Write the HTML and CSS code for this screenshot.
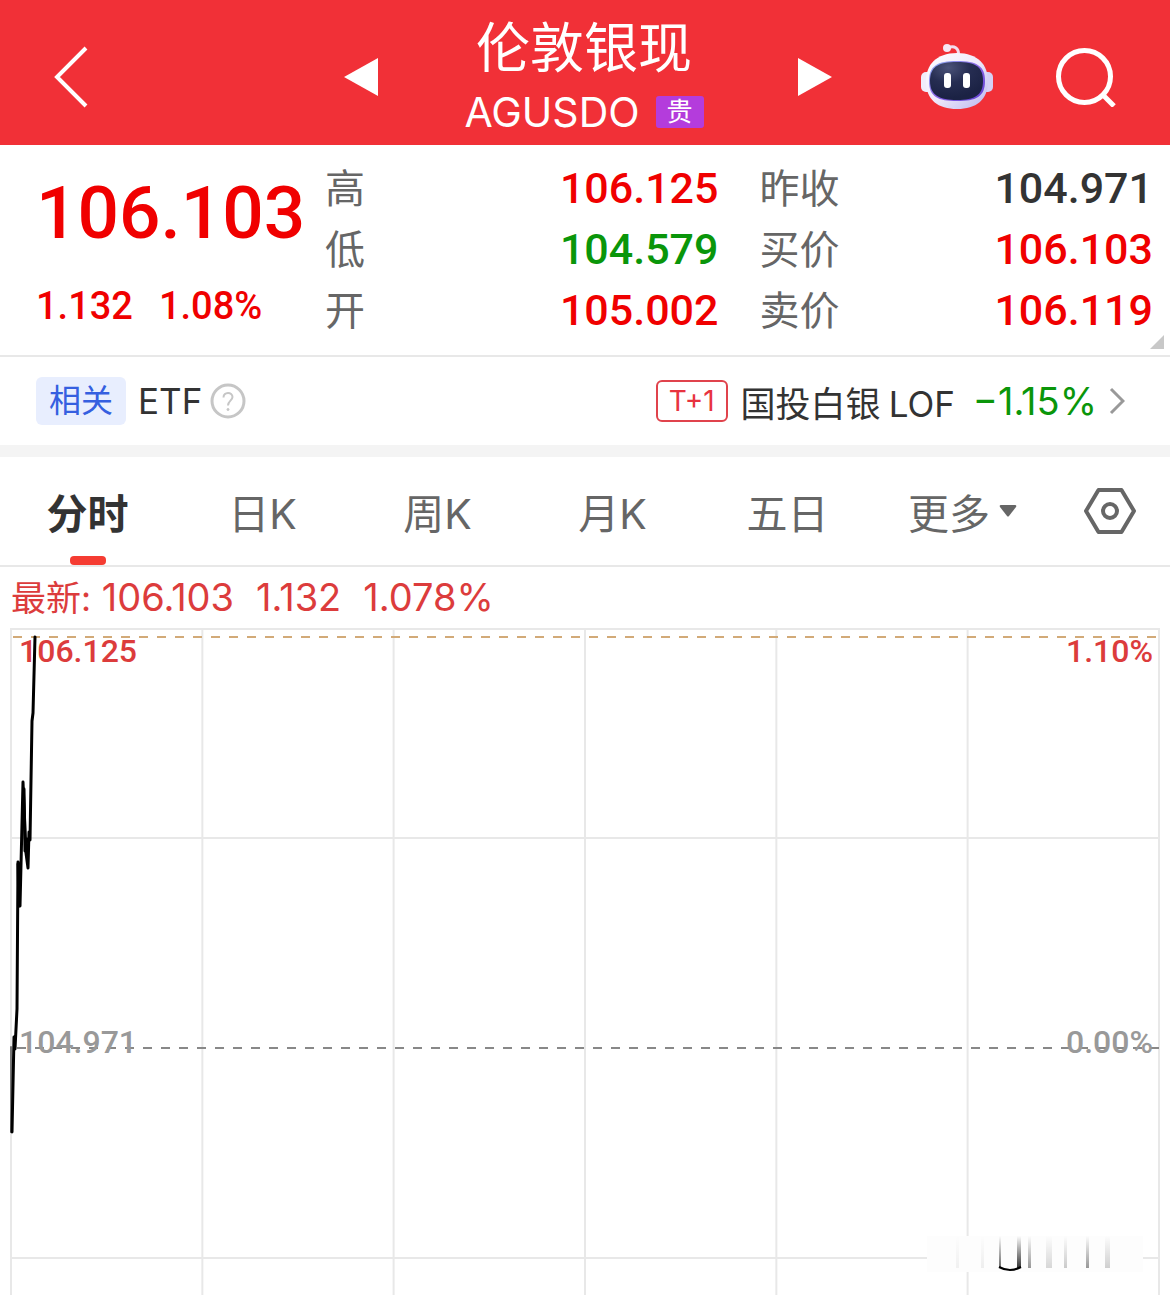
FILE: index.html
```html
<!DOCTYPE html>
<html lang="zh-CN">
<head>
    <meta charset="UTF-8">
    <meta name="viewport" content="width=device-width, initial-scale=1.0">
    <title>伦敦银现 AGUSDO</title>
    <link rel="stylesheet" href="styles.css">
</head>
<body>
    <header class="header">
        <div class="header-left">
            <button class="icon-btn" aria-label="返回">
                <svg width="36" height="64" viewBox="0 0 36 64" fill="none" stroke="#fff" stroke-width="4">
                    <path d="M34 3 L5 32 L34 61"/>
                </svg>
            </button>
            <button class="icon-btn" aria-label="上一个">
                <svg width="34" height="38" viewBox="0 0 34 38"><path d="M34 0 V38 L0 19 Z" fill="#fff"/></svg>
            </button>
        </div>
        <div class="header-title">
            <h1>伦敦银现</h1>
            <p><span>AGUSDO</span><span class="badge">贵</span></p>
        </div>
        <div class="header-right">
            <button class="icon-btn next" aria-label="下一个">
                <svg width="34" height="38" viewBox="0 0 34 38"><path d="M0 0 V38 L34 19 Z" fill="#fff"/></svg>
            </button>
            <button class="icon-btn" aria-label="智能助手">
                <svg width="72" height="68" viewBox="0 0 72 68">
                    <defs>
                        <linearGradient id="shell" x1="0" y1="0" x2="1" y2="1">
                            <stop offset="0" stop-color="#fff"/>
                            <stop offset="0.5" stop-color="#efe9fb"/>
                            <stop offset="1" stop-color="#b9b6ee"/>
                        </linearGradient>
                        <linearGradient id="rim" x1="0" y1="0" x2="1" y2="1">
                            <stop offset="0" stop-color="#8fb4f0"/>
                            <stop offset="0.5" stop-color="#8a63e6"/>
                            <stop offset="1" stop-color="#5f3fd0"/>
                        </linearGradient>
                        <radialGradient id="face" cx="0.35" cy="0.15" r="0.8">
                            <stop offset="0" stop-color="#4a5278"/>
                            <stop offset="0.5" stop-color="#262d52"/>
                            <stop offset="1" stop-color="#1b2244"/>
                        </radialGradient>
                    </defs>
                    <path d="M27 5 C33 2 38 5 37.500 12" fill="none" stroke="#f3dcee" stroke-width="3"/>
                    <circle cx="26" cy="5" r="4" fill="#f6e6f4"/>
                    <rect x="0" y="29" width="12" height="20" rx="5" fill="#f1edfb"/>
                    <rect x="60" y="29" width="12" height="20" rx="5" fill="#d5d0f5"/>
                    <path d="M36 10 C57 10 67 22 67 38 C67 57 55 66 36 66 C17 66 5 57 5 38 C5 22 15 10 36 10 Z" fill="url(#shell)"/>
                    <path d="M36 18 C56 18 64 23 64 38 C64 54 55 58 36 58 C17 58 8 54 8 38 C8 23 16 18 36 18 Z" fill="url(#rim)"/>
                    <path d="M36 19 C55 19 62 24 62 38 C62 52 54 57 36 57 C18 57 9 52 9 38 C9 24 17 19 36 19 Z" fill="url(#face)"/>
                    <rect x="23" y="30" width="7" height="15" rx="3" fill="#fff"/>
                    <rect x="42" y="30" width="7" height="15" rx="3" fill="#fff"/>
                </svg>
            </button>
            <button class="icon-btn" aria-label="搜索">
                <svg width="60" height="60" viewBox="0 0 60 60" fill="none" stroke="#fff">
                    <circle cx="28.500" cy="29.500" r="26" stroke-width="5"/>
                    <path d="M47 48 L58 59" stroke-width="5"/>
                </svg>
            </button>
        </div>
    </header>

    <section class="quote">
        <div class="quote-main">
            <div class="price">106.103</div>
            <div class="change"><span>1.132</span><span>1.08%</span></div>
        </div>
        <dl class="quote-list">
            <dt>高</dt><dd class="up">106.125</dd>
            <dt>低</dt><dd class="down">104.579</dd>
            <dt>开</dt><dd class="up">105.002</dd>
        </dl>
        <dl class="quote-list">
            <dt>昨收</dt><dd>104.971</dd>
            <dt>买价</dt><dd class="up">106.103</dd>
            <dt>卖价</dt><dd class="up">106.119</dd>
        </dl>
        <svg class="expand" width="14" height="14" viewBox="0 0 14 14"><path d="M14 0 V14 H0 Z" fill="#c8c8c8"/></svg>
    </section>

    <section class="related">
        <span class="tag">相关</span>
        <span class="related-type">ETF</span>
        <button class="icon-btn" aria-label="说明">
            <svg width="36" height="36" viewBox="0 0 36 36" fill="none" stroke="#c6c6c6">
                <circle cx="18" cy="18" r="16" stroke-width="3"/>
                <path d="M13.500 14.500 C13.500 8.500 22.500 8.500 22.500 14 C22.500 17.500 18 18 18 22.500" stroke-width="2"/>
                <circle cx="18" cy="26.500" r="1" fill="#c6c6c6" stroke-width="1"/>
            </svg>
        </button>
        <a class="fund" href="#">
            <span class="t1">T+1</span>
            <span class="fund-name">国投白银<span>LOF</span></span>
            <span class="fund-change">−1.15%</span>
            <svg width="16" height="28" viewBox="0 0 16 28" fill="none" stroke="#999" stroke-width="3"><path d="M2 2 L14 14 L2 26"/></svg>
        </a>
    </section>

    <nav class="tabs">
        <button class="tab active">分时</button>
        <button class="tab">日K</button>
        <button class="tab">周K</button>
        <button class="tab">月K</button>
        <button class="tab">五日</button>
        <button class="tab">更多
            <svg width="18" height="14" viewBox="0 0 18 14"><path d="M2 1 H16 Q18 1 17 3 L10 12 Q9 13 8 12 L1 3 Q0 1 2 1 Z" fill="#666"/></svg>
        </button>
        <button class="tab" aria-label="设置">
            <svg width="52" height="46" viewBox="0 0 52 46" fill="none" stroke="#666">
                <path d="M14.500 2 H37.500 L50 23 L37.500 44 H14.500 L2 23 Z" stroke-width="4" stroke-linejoin="round"/>
                <circle cx="26" cy="23" r="7" stroke-width="4"/>
            </svg>
        </button>
    </nav>

    <main class="intraday">
        <p class="latest"><span><span class="latest-label">最新:</span> 106.103</span><span>1.132</span><span>1.078%</span></p>
        <div class="chart">
            <svg class="plot" width="100%" height="100%">
                <defs>
                    <linearGradient id="fade" x1="0" y1="0" x2="0" y2="1">
                        <stop offset="0" stop-color="#000" stop-opacity="0"/>
                        <stop offset="1" stop-color="#000"/>
                    </linearGradient>
                </defs>
                <g class="grid">
                    <line x1="0" y1="1" x2="100%" y2="1"/>
                    <line x1="0" y1="210" x2="100%" y2="210"/>
                    <line x1="0" y1="630" x2="100%" y2="630"/>
                    <line x1="0" y1="0" x2="0" y2="100%"/>
                    <line x1="16.67%" y1="0" x2="16.67%" y2="100%"/>
                    <line x1="33.33%" y1="0" x2="33.33%" y2="100%"/>
                    <line x1="50%" y1="0" x2="50%" y2="100%"/>
                    <line x1="66.67%" y1="0" x2="66.67%" y2="100%"/>
                    <line x1="83.33%" y1="0" x2="83.33%" y2="100%"/>
                    <line x1="100%" y1="0" x2="100%" y2="100%"/>
                </g>
                <line class="high-line" x1="2" y1="9" x2="100%" y2="9"/>
                <line class="base-line" x1="6" y1="420" x2="100%" y2="420"/>
                <!-- stamp in the lower right corner -->
                <svg class="stamp" x="100%" y="600">
                    <rect x="-232" y="8" width="216" height="36" fill="#fdfdfd"/>
                    <g fill="url(#fade)">
                        <rect x="-160" y="8" width="2" height="32" opacity="0.6"/>
                        <rect x="-142" y="8" width="4" height="32" opacity="0.8"/>
                        <rect x="-131" y="8" width="3" height="32" opacity="0.4"/>
                        <rect x="-113" y="8" width="6" height="32" opacity="0.15"/>
                        <rect x="-95" y="8" width="3" height="32" opacity="0.2"/>
                        <rect x="-73" y="8" width="3" height="32" opacity="0.4"/>
                        <rect x="-54" y="8" width="5" height="32" opacity="0.18"/>
                        <rect x="-178" y="8" width="3" height="32" opacity="0.06"/>
                        <rect x="-203" y="8" width="3" height="32" opacity="0.05"/>
                    </g>
                    <path d="M-160 39 Q-149 45 -138 39" fill="none" stroke="#000" stroke-width="2"/>
                </svg>
            </svg>
            <span class="mark high">106.125</span>
            <span class="mark high right">1.10%</span>
            <span class="mark base">104.971</span>
            <span class="mark base right">0.00%</span>
            <svg class="plot" width="100%" height="100%" fill="none" stroke="#000" stroke-width="3" stroke-linejoin="round" stroke-linecap="round">
                <path d="M0 419 L0 504" stroke="#777" stroke-width="2"/>
                <path d="M1 504 L3 409 L4 421 L6 381 L7 234 L9 278 L12 154 L15 225 L17 240 L18 204 L19 212 L21 93 L22 85 L24 9"/>
                <path d="M7 236 L8 278 M13 161 L14 223 L16 211"/>
            </svg>
        </div>
    </main>
</body>
</html>
```
FILE: styles.css
```css
:root {
    --red: #f13037;
    --up: #f00000;
    --down: #0a960a;
    --text: #333;
    --muted: #666;
    --line: #e8e8e8;
    --digits: Roboto, "Noto Sans CJK SC", sans-serif;
}

* {
    box-sizing: border-box;
}

body {
    margin: 0;
    min-height: 100vh;
    display: flex;
    flex-direction: column;
    background: #fff;
    color: var(--text);
    font-family: Inter, "Noto Sans CJK SC", sans-serif;
}

h1, p, dl, dd {
    margin: 0;
    font-weight: 400;
}

button {
    padding: 0;
    border: none;
    background: none;
    color: inherit;
    font: inherit;
    cursor: pointer;
}

svg {
    display: block;
    flex: none;
}

.header {
    display: grid;
    grid-template-columns: 1fr 420px 1fr;
    align-items: center;
    height: 145px;
    padding: 8px 46px 0 52px;
    background: var(--red);
    color: #fff;
}

.header-left,
.header-right {
    display: flex;
    align-items: center;
    justify-content: space-between;
}

.header-right {
    gap: 63px;
    padding-right: 8px;
}

.next {
    margin-right: auto;
}

.header-title {
    padding: 0 8px 3px 0;
    text-align: center;
}

.header-title h1 {
    font-size: 54px;
    line-height: 74px;
}

.header-title p {
    display: flex;
    align-items: center;
    justify-content: center;
    gap: 16px;
    font-size: 41px;
    line-height: 52px;
}

.badge {
    width: 48px;
    border-radius: 3px;
    background: #b43cdc;
    font-size: 26px;
    line-height: 32px;
}

.quote {
    position: relative;
    display: flex;
    padding: 13px 17px 11px 36px;
    border-bottom: 2px solid var(--line);
}

.quote-list {
    flex: 1;
    display: grid;
    grid-template-columns: auto 1fr;
    grid-auto-rows: 61px;
    align-content: start;
    font-size: 40px;
    line-height: 61px;
}

.quote-list + .quote-list {
    margin-left: 41px;
}

.quote-list dt {
    color: var(--muted);
}

.quote-list dd {
    font-family: var(--digits);
    font-size: 43px;
    font-weight: 500;
    text-align: right;
}

.quote-main {
    flex: 0 0 289px;
    color: var(--up);
    font-family: var(--digits);
    font-weight: 500;
}

.price {
    font-size: 73px;
    line-height: 110px;
}

.change {
    display: flex;
    gap: 26px;
    font-size: 38px;
    line-height: 76px;
}

.quote-list .up {
    color: var(--up);
}

.quote-list .down {
    color: var(--down);
}

.expand {
    position: absolute;
    right: 6px;
    bottom: 6px;
}

.related {
    display: flex;
    align-items: center;
    height: 100px;
    padding: 0 45px 0 36px;
    border-bottom: 12px solid #f4f4f4;
    font-size: 35px;
}

.tag {
    padding: 0 13px;
    border-radius: 6px;
    background: #e8eefe;
    color: #355fe0;
    font-size: 32px;
    line-height: 48px;
}

.related-type {
    margin: 0 8px 0 12px;
}

.fund {
    display: flex;
    align-items: center;
    margin-left: auto;
    color: inherit;
    text-decoration: none;
}

.t1 {
    margin-right: 13px;
    padding: 0 11px;
    border: 2px solid #e0434c;
    border-radius: 6px;
    color: #e8333f;
    font-size: 28px;
    line-height: 38px;
}

.fund-name span {
    margin-left: 8px;
}

.fund-change {
    margin: 0 12px 0 18px;
    color: var(--down);
    font-size: 38px;
}

.tabs {
    display: grid;
    grid-template-columns: repeat(6, 1fr) 120px;
    height: 110px;
    border-bottom: 2px solid var(--line);
    color: var(--muted);
    font-size: 41px;
}

.tab {
    position: relative;
    display: flex;
    align-items: center;
    justify-content: center;
    gap: 9px;
}

.tab.active {
    color: var(--text);
    font-weight: 700;
}

.tab.active::after {
    content: "";
    position: absolute;
    bottom: 0;
    left: 50%;
    width: 36px;
    height: 9px;
    margin-left: -18px;
    border-radius: 4px;
    background: #f53c32;
}

.intraday {
    flex: 1;
    display: flex;
    flex-direction: column;
    padding: 0 11px;
}

.latest {
    display: flex;
    gap: 22px;
    color: #dc3c3c;
    font-size: 38px;
    line-height: 60px;
}

.latest-label {
    font-size: 35px;
}

.chart {
    position: relative;
    flex: 1;
    min-height: 640px;
}

.plot {
    position: absolute;
    inset: 0;
    overflow: visible;
}

.stamp {
    overflow: visible;
}

.grid {
    stroke: var(--line);
    stroke-width: 2;
}

.high-line {
    stroke: #d2aa78;
    stroke-width: 2;
    stroke-dasharray: 9 9;
}

.base-line {
    stroke: #888;
    stroke-width: 2;
    stroke-dasharray: 9 9;
}

.mark {
    position: absolute;
    left: 8px;
    font-family: var(--digits);
    font-size: 32px;
    font-weight: 500;
    line-height: 40px;
}

.mark.right {
    left: auto;
    right: 6px;
}

.mark.high {
    top: 3px;
    color: #dc3c3c;
}

.mark.base {
    top: 394px;
    color: #999;
}
```
